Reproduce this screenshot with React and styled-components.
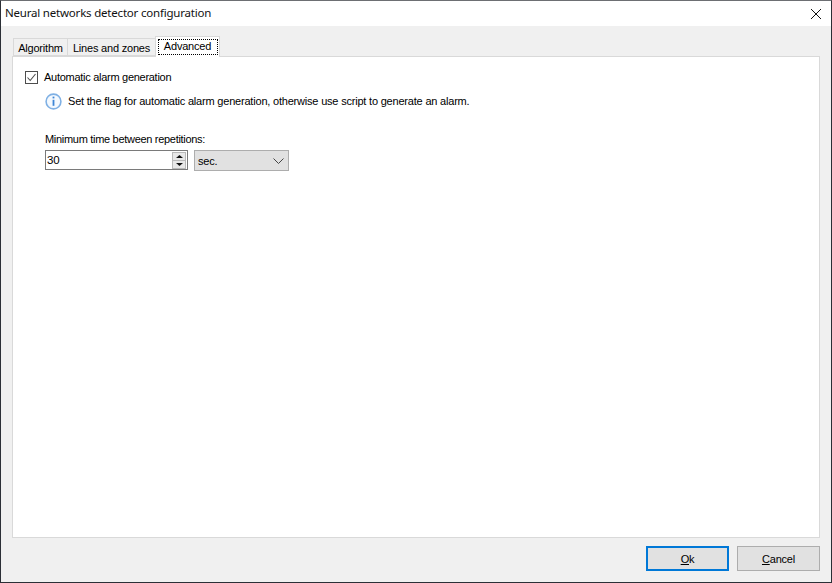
import React from 'react';
import styled, { createGlobalStyle } from 'styled-components';

const Global = createGlobalStyle`
  html, body { margin: 0; padding: 0; background: #f0f0f0; }
  body { font-family: "Liberation Sans", Arial, sans-serif; font-size: 11px; letter-spacing: -0.2px; color: #000; }
`;

const Window = styled.div`
  width: 832px;
  height: 583px;
  box-sizing: border-box;
  border: 1px solid #2b2f36;
  border-top-color: #6d6f73;
  display: flex;
  flex-direction: column;
  background: #f0f0f0;
`;

const TitleBar = styled.div`
  height: 25px;
  flex: none;
  background: #fff;
  display: flex;
  align-items: center;
  justify-content: space-between;
  padding: 0 10px 0 4px;
`;

const Title = styled.span`
  font-family: "Noto Sans", sans-serif;
  font-size: 11.5px;
  line-height: 14px;
  margin-top: -1px;
  color: #111;
`;

const Body = styled.div`
  flex: 1;
  display: flex;
  flex-direction: column;
  padding: 12px 11px 0;
  min-height: 0;
`;

const Tabs = styled.div`
  display: flex;
  align-items: flex-end;
  height: 18px;
  flex: none;
  padding-left: 1px;
  position: relative;
  z-index: 1;
`;

const Tab = styled.div`
  box-sizing: border-box;
  height: ${(p) => (p.$active ? '21px' : '18px')};
  width: ${(p) => p.$width}px;
  flex: none;
  display: flex;
  align-items: ${(p) => (p.$active ? 'flex-start' : 'center')};
  justify-content: center;
  padding-top: ${(p) => (p.$active ? '2px' : '2px')};
  background: ${(p) => (p.$active ? '#fff' : '#f0f0f0')};
  border: 1px solid #d9d9d9;
  border-bottom: ${(p) => (p.$active ? 'none' : '1px solid #d9d9d9')};
  margin-left: ${(p) => (p.$first ? '0' : '-1px')};
  margin-bottom: ${(p) => (p.$active ? '-1px' : '0')};
`;

const FocusLabel = styled.span`
  box-sizing: border-box;
  width: 60px;
  height: 16px;
  border: 1px dotted #000;
  display: flex;
  align-items: center;
  justify-content: center;
  padding-bottom: 2px;
`;

const Panel = styled.div`
  flex: 1;
  box-sizing: border-box;
  background: #fff;
  border: 1px solid #d9d9d9;
  padding: 12px 12px;
  display: flex;
  flex-direction: column;
`;

const CheckRow = styled.label`
  display: flex;
  align-items: center;
  gap: 6px;
  height: 16px;
  letter-spacing: -0.28px;
`;

const CheckBox = styled.span`
  width: 13px;
  height: 13px;
  box-sizing: border-box;
  border: 1px solid #4d4d4d;
  background: #fff;
  display: flex;
  align-items: center;
  justify-content: center;
`;

const InfoRow = styled.div`
  display: flex;
  align-items: center;
  gap: 6px;
  margin: 7px 0 0 20px;
  height: 18px;
`;

const FieldLabel = styled.div`
  margin: 22px 0 0 20px;
  line-height: 14px;
  letter-spacing: -0.3px;
`;

const FieldRow = styled.div`
  display: flex;
  gap: 6px;
  margin: 4px 0 0 20px;
`;

const Spin = styled.div`
  box-sizing: border-box;
  width: 143px;
  height: 20px;
  background: #fff;
  border: 1px solid #7a7a7a;
  display: flex;
  align-items: center;
  justify-content: space-between;
  padding: 0 1px 0 1px;
  font-size: 11.5px;
`;

const SpinButtons = styled.div`
  width: 14px;
  height: 17px;
  display: flex;
  flex-direction: column;
  background: #e8e8e8;
  border: 1px solid #b9b9b9;
  box-sizing: border-box;
`;

const SpinButton = styled.div`
  flex: 1;
  display: flex;
  align-items: center;
  justify-content: center;
  border-bottom: ${(p) => (p.$top ? '1px solid #b9b9b9' : 'none')};
`;

const Select = styled.div`
  box-sizing: border-box;
  width: 95px;
  height: 21px;
  background: #e1e1e1;
  border: 1px solid #adadad;
  display: flex;
  align-items: center;
  justify-content: space-between;
  padding: 0 4px 0 3px;
`;

const Footer = styled.div`
  flex: none;
  box-sizing: border-box;
  height: 44px;
  display: flex;
  justify-content: flex-end;
  align-items: flex-start;
  gap: 8px;
  padding: 8px 0 0;
`;

const Button = styled.div`
  box-sizing: border-box;
  width: 83px;
  height: 25px;
  background: #e1e1e1;
  border: ${(p) => (p.$primary ? '2px solid #0078d7' : '1px solid #adadad')};
  display: flex;
  align-items: center;
  justify-content: center;
  u { text-underline-offset: 1px; }
`;

const CloseIcon = () => (
  <svg width="10" height="10" viewBox="0 0 10 10">
    <path d="M0 0L10 10M10 0L0 10" stroke="#111" strokeWidth="1" fill="none" />
  </svg>
);

const CheckMark = () => (
  <svg width="11" height="11" viewBox="0 0 11 11">
    <path d="M1.5 5.5L4.2 8.5L9.5 2" stroke="#4d4d4d" strokeWidth="1.1" fill="none" />
  </svg>
);

const InfoIcon = () => (
  <svg width="17" height="17" viewBox="0 0 17 17">
    <circle cx="8.5" cy="8.5" r="7.4" fill="#f4f9fe" stroke="#7fb0e4" strokeWidth="1.6" />
    <rect x="7.6" y="3.6" width="1.8" height="1.8" fill="#3d86d6" />
    <rect x="7.6" y="6.8" width="1.8" height="6" fill="#3d86d6" />
  </svg>
);

const ArrowUp = () => (
  <svg width="7" height="3" viewBox="0 0 7 3"><path d="M3.5 0L7 3H0Z" fill="#111" /></svg>
);

const ArrowDown = () => (
  <svg width="7" height="3" viewBox="0 0 7 3"><path d="M0 0H7L3.5 3Z" fill="#111" /></svg>
);

const Chevron = () => (
  <svg width="11" height="6" viewBox="0 0 11 6">
    <path d="M0.5 0.5L5.5 5.5L10.5 0.5" stroke="#444" strokeWidth="1" fill="none" />
  </svg>
);

export default function App() {
  return (
    <Window>
      <Global />
      <TitleBar>
        <Title>Neural networks detector configuration</Title>
        <CloseIcon />
      </TitleBar>
      <Body>
        <Tabs>
          <Tab $first $width={55}>Algorithm</Tab>
          <Tab $width={89}>Lines and zones</Tab>
          <Tab $active $width={65}><FocusLabel>Advanced</FocusLabel></Tab>
        </Tabs>
        <Panel>
          <CheckRow>
            <CheckBox><CheckMark /></CheckBox>
            Automatic alarm generation
          </CheckRow>
          <InfoRow>
            <InfoIcon />
            Set the flag for automatic alarm generation, otherwise use script to generate an alarm.
          </InfoRow>
          <FieldLabel>Minimum time between repetitions:</FieldLabel>
          <FieldRow>
            <Spin>
              30
              <SpinButtons>
                <SpinButton $top><ArrowUp /></SpinButton>
                <SpinButton><ArrowDown /></SpinButton>
              </SpinButtons>
            </Spin>
            <Select>sec.<Chevron /></Select>
          </FieldRow>
        </Panel>
        <Footer>
          <Button $primary><span><u>O</u>k</span></Button>
          <Button><span><u>C</u>ancel</span></Button>
        </Footer>
      </Body>
    </Window>
  );
}
